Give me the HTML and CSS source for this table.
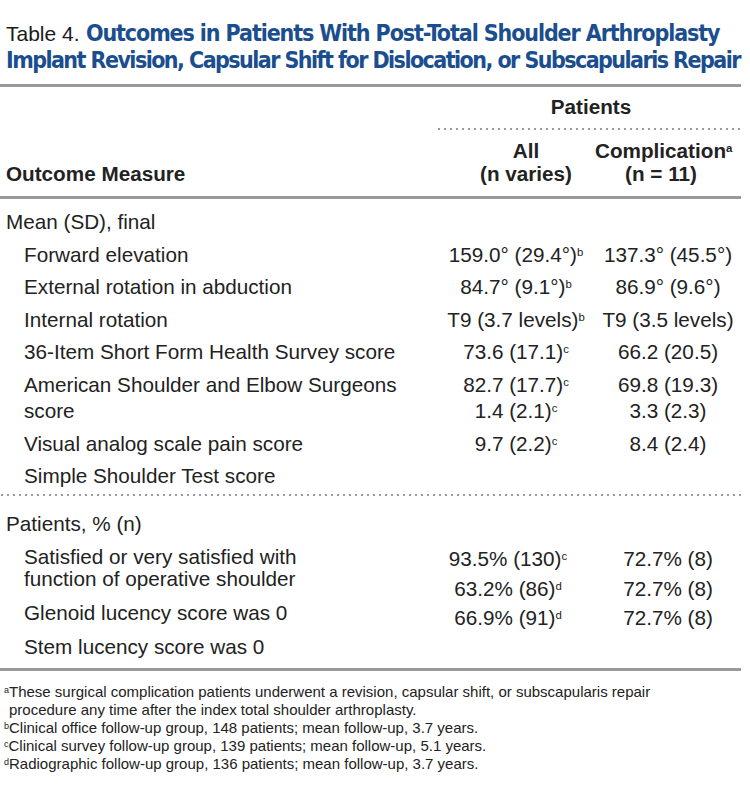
FILE: index.html
```html
<!DOCTYPE html>
<html>
<head>
<meta charset="utf-8">
<link rel="stylesheet" href="styles.css">
</head>
<body>
<div class="doc">
  <div class="caption"><span class="tnum">Table 4.</span> <span class="ttl">Outcomes in Patients With Post-Total Shoulder Arthroplasty<br><span class="ttl-l2">Implant Revision, Capsular Shift for Dislocation, or Subscapularis Repair</span></span></div>

  <div class="table">
    <div class="thead">
      <div class="th-group"><span class="th-group-text">Patients</span></div>
      <div class="th-measure">Outcome Measure</div>
      <div class="th-all">All<br>(n varies)</div>
      <div class="th-comp">Complication<sup>a</sup><br>(n = 11)</div>
    </div>

    <div class="section s1">
      <div class="sec-title">Mean (SD), final</div>
      <div class="row"><div class="lab">Forward elevation</div><div class="v1">159.0° (29.4°)<sup>b</sup></div><div class="v2">137.3° (45.5°)</div></div>
      <div class="row"><div class="lab">External rotation in abduction</div><div class="v1">84.7° (9.1°)<sup>b</sup></div><div class="v2">86.9° (9.6°)</div></div>
      <div class="row"><div class="lab">Internal rotation</div><div class="v1">T9 (3.7 levels)<sup>b</sup></div><div class="v2">T9 (3.5 levels)</div></div>
      <div class="row"><div class="lab">36-Item Short Form Health Survey score</div><div class="v1">73.6 (17.1)<sup>c</sup></div><div class="v2">66.2 (20.5)</div></div>
      <div class="row wrap-first"><div class="lab">American Shoulder and Elbow Surgeons</div><div class="v1">82.7 (17.7)<sup>c</sup></div><div class="v2">69.8 (19.3)</div></div>
      <div class="row wrap-next"><div class="lab">score</div><div class="v1">1.4 (2.1)<sup>c</sup></div><div class="v2">3.3 (2.3)</div></div>
      <div class="row"><div class="lab">Visual analog scale pain score</div><div class="v1">9.7 (2.2)<sup>c</sup></div><div class="v2">8.4 (2.4)</div></div>
      <div class="row"><div class="lab">Simple Shoulder Test score</div><div class="v1"></div><div class="v2"></div></div>
    </div>

    <div class="section s2">
      <div class="sec-title">Patients, % (n)</div>
      <div class="cols">
        <div class="labs">
          <div class="lab2">Satisfied or very satisfied with<br>function of operative shoulder</div>
          <div class="lab2">Glenoid lucency score was 0</div>
          <div class="lab2">Stem lucency score was 0</div>
        </div>
        <div class="vals vals1">
          <div>93.5% (130)<sup>c</sup></div>
          <div>63.2% (86)<sup>d</sup></div>
          <div>66.9% (91)<sup>d</sup></div>
        </div>
        <div class="vals vals2">
          <div>72.7% (8)</div>
          <div>72.7% (8)</div>
          <div>72.7% (8)</div>
        </div>
      </div>
    </div>
  </div>

  <div class="notes">
    <p class="note"><sup>a</sup>These surgical complication patients underwent a revision, capsular shift, or subscapularis repair procedure any time after the index total shoulder arthroplasty.</p>
    <p class="note"><sup>b</sup>Clinical office follow-up group, 148 patients; mean follow-up, 3.7 years.</p>
    <p class="note"><sup>c</sup>Clinical survey follow-up group, 139 patients; mean follow-up, 5.1 years.</p>
    <p class="note"><sup>d</sup>Radiographic follow-up group, 136 patients; mean follow-up, 3.7 years.</p>
  </div>
</div>
</body>
</html>
```

FILE: styles.css
```css
html, body {
  margin: 0;
  padding: 0;
  background: #ffffff;
}

body {
  font-family: "Liberation Sans", Arial, sans-serif;
  color: #222222;
}

.doc {
  width: 750px;
}

.caption {
  margin: 20px 0 0 0;
  padding-left: 6px;
  font-family: "Liberation Sans Narrow", "Arial Narrow", "Liberation Sans", sans-serif;
  font-size: 23px;
  line-height: 27px;
  white-space: nowrap;
}

.tnum {
  font-family: "Liberation Sans", Arial, sans-serif;
  font-size: 21px;
  color: #1a1a1a;
}

.ttl {
  font-family: "Liberation Sans Narrow", "Arial Narrow", "DejaVu Sans Condensed", sans-serif;
  font-stretch: condensed;
  font-weight: bold;
  font-size: 23px;
  letter-spacing: -1.1px;
  color: #1b4e8e;
}

.ttl-l2 {
  letter-spacing: -1.55px;
}

.table {
  width: 741px;
  margin-top: 10px;
  border-top: 3px solid #999999;
  border-bottom: 3px solid #999999;
  font-size: 20.7px;
}

.thead {
  display: grid;
  grid-template-columns: 437px 158px 146px;
  border-bottom: 3px solid #999999;
  font-weight: bold;
  line-height: 23px;
  padding-bottom: 11px;
}

.th-group {
  grid-column: 2 / 4;
  grid-row: 1;
  text-align: center;
  padding: 8px 0 12px 0;
  background-image: linear-gradient(to right, #9a9a9a 2px, transparent 2px);
  background-size: 6px 2px;
  background-repeat: repeat-x;
  background-position: 1px bottom;
}

.th-group-text {
  display: inline-block;
  padding-left: 4px;
}

.th-measure {
  grid-column: 1;
  grid-row: 2;
  align-self: end;
  padding-left: 6px;
}

.th-all {
  grid-column: 2;
  grid-row: 2;
  text-align: center;
  padding: 9px 0 0 20px;
}

.th-comp {
  grid-column: 3;
  grid-row: 2;
  text-align: center;
  padding: 9px 14px 0 0;
}

.section {
  line-height: 26.5px;
}

.s1 {
  padding: 7px 0 3px 0;
  background-image: linear-gradient(to right, #9a9a9a 2px, transparent 2px);
  background-size: 6px 2px;
  background-repeat: repeat-x;
  background-position: 1px bottom;
}

.sec-title {
  padding: 3px 0 3px 6px;
}

.row {
  display: grid;
  grid-template-columns: 437px 158px 146px;
  padding: 3px 0;
}

.row.wrap-first {
  padding-bottom: 0;
}

.row.wrap-next {
  padding-top: 0;
}

.lab {
  padding-left: 24px;
}

.v1, .v2 {
  text-align: center;
  white-space: nowrap;
}

.s2 {
  padding: 12px 0 4px 0;
}

.cols {
  display: grid;
  grid-template-columns: 437px 158px 146px;
}

.lab2 {
  padding: 6px 0 6px 24px;
  line-height: 22px;
}

.vals {
  padding-top: 4px;
  line-height: 29.5px;
  text-align: center;
  white-space: nowrap;
}

.vals1 {
  padding-right: 16px;
}

sup {
  font-size: 0.55em;
  line-height: 0;
  vertical-align: 0.55em;
}

.notes {
  width: 680px;
  padding: 12px 0 0 4px;
  font-size: 15px;
  line-height: 18px;
}

.note {
  margin: 0;
  padding-left: 5px;
  text-indent: -5px;
}

.note sup {
  font-size: 0.6em;
  vertical-align: 0.5em;
}
```
